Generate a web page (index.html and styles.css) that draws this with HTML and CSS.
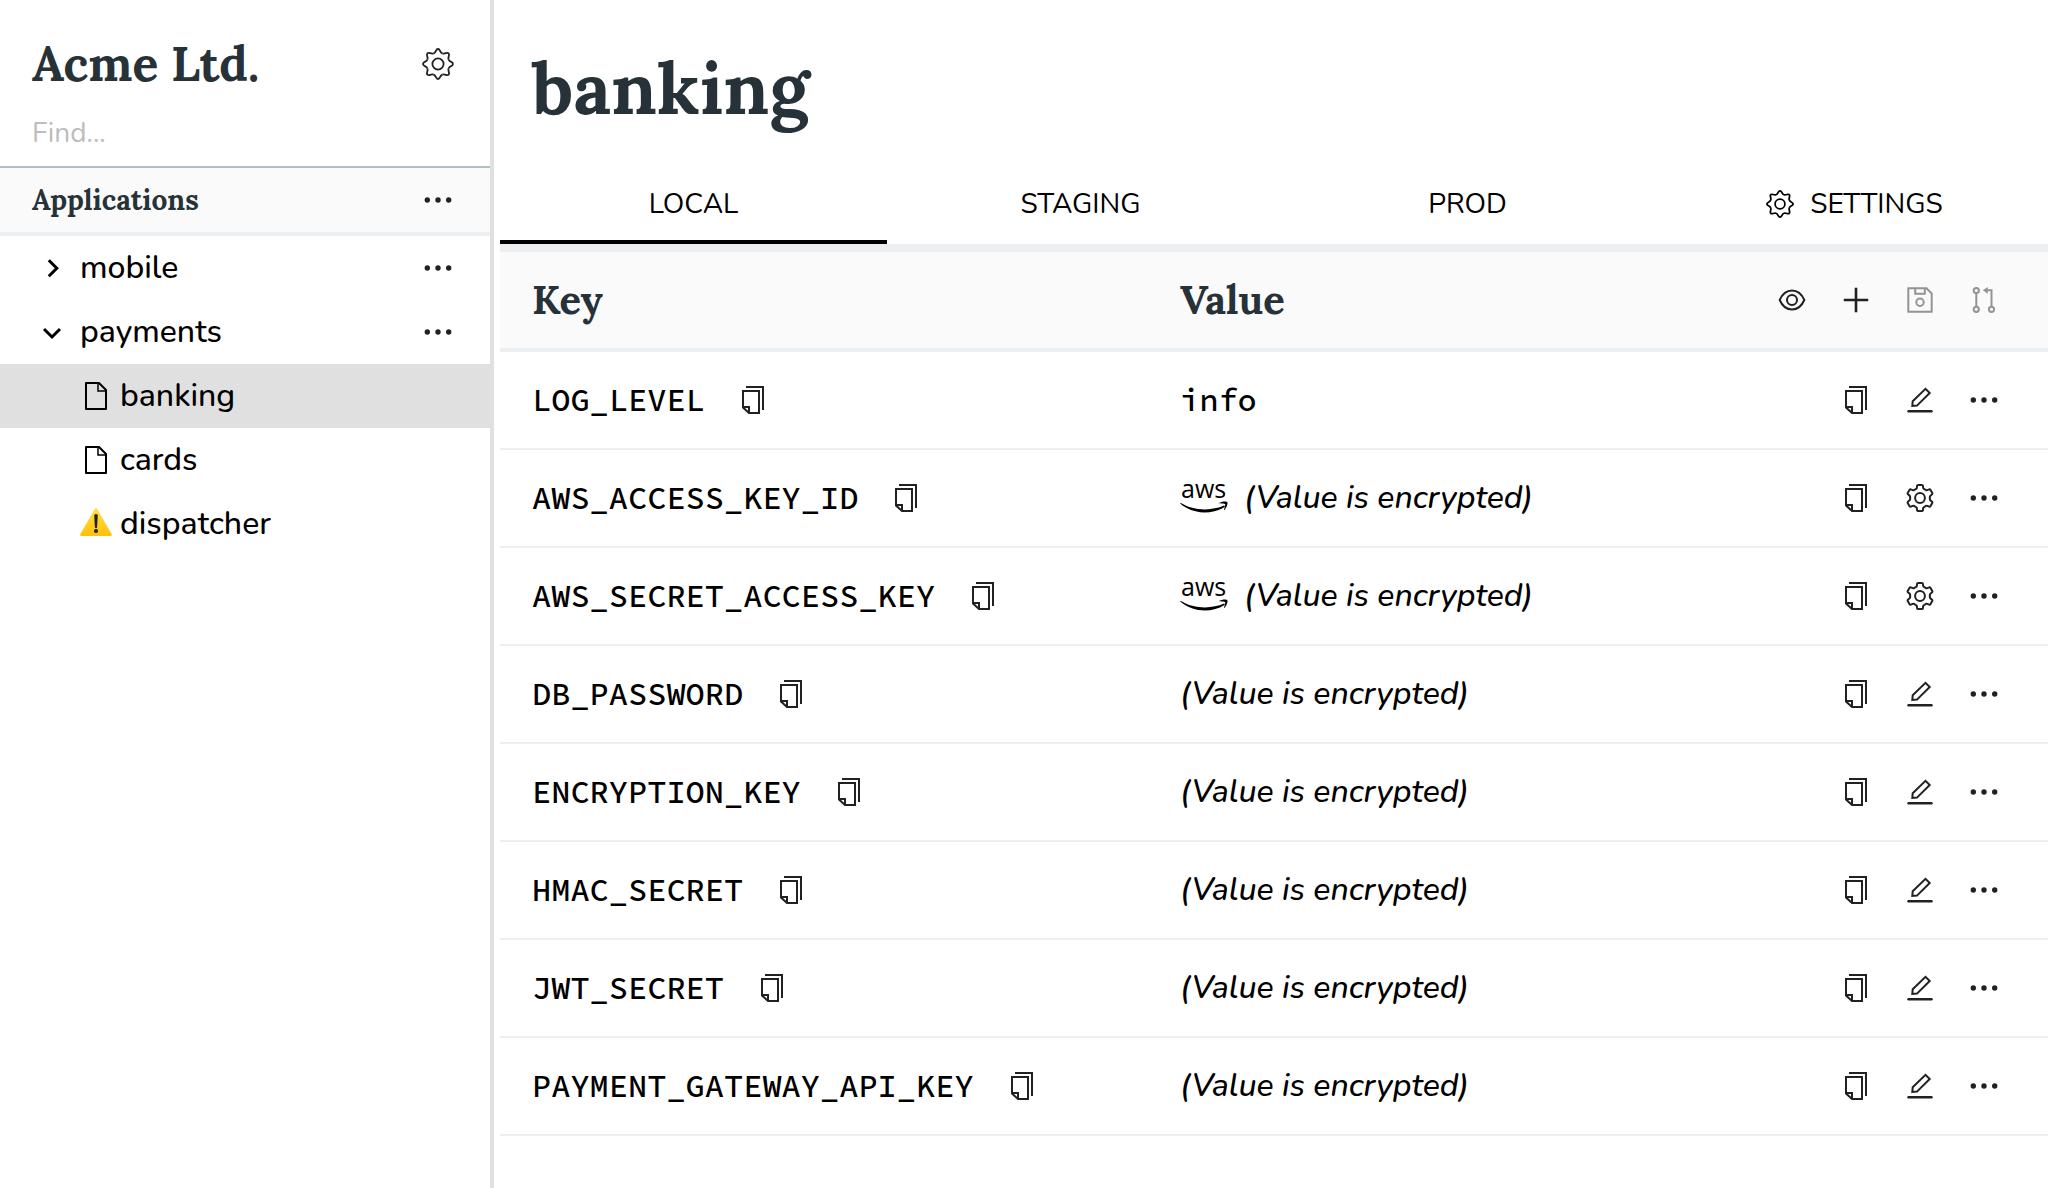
FILE: index.html
```html
<!DOCTYPE html>
<html lang="en">
<head>
    <meta charset="UTF-8">
    <title>banking - Acme Ltd.</title>
    <meta name="viewport" content="width=device-width, initial-scale=1">
    <link rel="stylesheet" href="styles.css">
</head>
<body>

    <!-- Icons -->
    <svg class="sprite" aria-hidden="true">
        <symbol id="gear" viewBox="0 0 32 32">
            <path id="cog" d="M11.6 5.4C14.4 4.2 13.6 1 16 1S17.6 4.2 20.4 5.4"/>
            <use href="#cog" transform="rotate(45 16 16)"/>
            <use href="#cog" transform="rotate(90 16 16)"/>
            <use href="#cog" transform="rotate(135 16 16)"/>
            <use href="#cog" transform="rotate(180 16 16)"/>
            <use href="#cog" transform="rotate(225 16 16)"/>
            <use href="#cog" transform="rotate(270 16 16)"/>
            <use href="#cog" transform="rotate(315 16 16)"/>
            <circle cx="16" cy="16" r="5.6"/>
        </symbol>
        <symbol id="gear-six" viewBox="0 0 32 32">
            <path id="cog-six" d="M11 7.4L12 7Q12.7 6.6 12.8 5.8L13.1 3.7Q13.3 2.9 14.1 2.9H17.9Q18.7 2.9 18.9 3.7L19.2 5.8Q19.3 6.6 20 7L21 7.4"/>
            <use href="#cog-six" transform="rotate(60 16 16)"/>
            <use href="#cog-six" transform="rotate(120 16 16)"/>
            <use href="#cog-six" transform="rotate(180 16 16)"/>
            <use href="#cog-six" transform="rotate(240 16 16)"/>
            <use href="#cog-six" transform="rotate(300 16 16)"/>
            <circle cx="16" cy="16" r="4.9"/>
        </symbol>
        <symbol id="dots" viewBox="0 0 32 32">
            <g fill="currentColor" stroke="none">
                <circle cx="5.3" cy="16" r="2.7"/>
                <circle cx="16" cy="16" r="2.7"/>
                <circle cx="26.7" cy="16" r="2.7"/>
            </g>
        </symbol>
        <symbol id="chevron-right" viewBox="0 0 32 32">
            <path d="M12.8 8.2L20.8 16.2L12.8 24.2" stroke-width="3"/>
        </symbol>
        <symbol id="chevron-down" viewBox="0 0 32 32">
            <path d="M8 13L16 21L24 13" stroke-width="3"/>
        </symbol>
        <symbol id="file" viewBox="0 0 32 32">
            <path d="M6 3H19L26 10V29H6Z" stroke-linejoin="round"/>
            <path d="M18 3V11H26" stroke-width="1.5"/>
        </symbol>
        <symbol id="warning" viewBox="0 0 32 32">
            <linearGradient id="amber" x1="0" y1="0" x2="0" y2="1">
                <stop offset="0" stop-color="#ffe045"/>
                <stop offset="1" stop-color="#ffc107"/>
            </linearGradient>
            <path d="M14.8 1Q16-.8 17.2 1L31.6 26Q32.4 28 30.5 28H1.5Q-.4 28 .4 26Z" fill="url(#amber)" stroke="none"/>
            <path d="M14.2 7.5Q14.2 6 16 6T17.8 7.5L17.1 19Q16.9 20.2 16 20.2T14.9 19Z" fill="#222" stroke="none"/>
            <circle cx="16" cy="23" r="2.1" fill="#222" stroke="none"/>
        </symbol>
        <symbol id="copy" viewBox="0 0 32 32">
            <path d="M9 3H26V26"/>
            <path d="M6 7H22V29H12L6 23.5Z"/>
            <path d="M6 23H12V29"/>
        </symbol>
        <symbol id="edit" viewBox="0 0 32 32">
            <path d="M8.3 22L8.7 17.2L21.5 4.8L25.7 9L13 21.6Z"/>
            <path d="M4.5 27.3H27.5" stroke-width="2.4" stroke-linecap="round"/>
        </symbol>
        <symbol id="eye" viewBox="0 0 32 32">
            <path d="M3.7 16C6.5 9.5 11 6.5 16 6.5S25.5 9.5 28.3 16C25.5 22.5 21 25.5 16 25.5S6.5 22.5 3.7 16Z"/>
            <circle cx="16" cy="16" r="5"/>
        </symbol>
        <symbol id="plus" viewBox="0 0 32 32">
            <path d="M16 3.8V28.2M3.8 16H28.2" stroke-width="2.6"/>
        </symbol>
        <symbol id="save" viewBox="0 0 32 32">
            <path d="M4.3 4.3H22.5L27.7 9.5V27.7H4.3Z"/>
            <path d="M11.2 4.3V9.8H20.8V4.3"/>
            <circle cx="16" cy="18.3" r="3.7"/>
        </symbol>
        <symbol id="compare" viewBox="0 0 32 32">
            <circle cx="8.3" cy="6.5" r="2.6"/>
            <circle cx="8.3" cy="25.3" r="2.6"/>
            <circle cx="23.5" cy="25.3" r="2.6"/>
            <path d="M8.3 9V22.7M23.5 22.7V6.3H18"/>
            <path d="M14.8 6.3L19.8 2.9V9.7Z" fill="currentColor" stroke="none"/>
        </symbol>
    </svg>

    <div class="app">
        <aside class="sidebar">
            <div class="org">
                <h2 class="org-name">Acme Ltd.</h2>
                <button class="icon-btn" aria-label="Organisation settings"><svg class="icon thin"><use href="#gear"/></svg></button>
            </div>
            <input class="find" type="text" placeholder="Find..." aria-label="Find">
            <div class="section">
                <h3 class="section-name">Applications</h3>
                <button class="icon-btn" aria-label="Applications menu"><svg class="icon"><use href="#dots"/></svg></button>
            </div>
            <nav class="tree">
                <div class="folder">
                    <a class="folder-link" href="#"><svg class="icon"><use href="#chevron-right"/></svg>mobile</a>
                    <button class="icon-btn" aria-label="mobile menu"><svg class="icon"><use href="#dots"/></svg></button>
                </div>
                <div class="folder">
                    <a class="folder-link" href="#"><svg class="icon"><use href="#chevron-down"/></svg>payments</a>
                    <button class="icon-btn" aria-label="payments menu"><svg class="icon"><use href="#dots"/></svg></button>
                </div>
                <a class="item active" href="#"><svg class="icon"><use href="#file"/></svg>banking</a>
                <a class="item" href="#"><svg class="icon"><use href="#file"/></svg>cards</a>
                <a class="item" href="#"><svg class="icon"><use href="#warning"/></svg>dispatcher</a>
            </nav>
        </aside>

        <main class="content">
            <header class="page-header">
                <h1>banking</h1>
            </header>

            <div class="tabs" role="tablist">
                <button class="tab selected" role="tab" aria-selected="true">LOCAL</button>
                <button class="tab" role="tab">STAGING</button>
                <button class="tab" role="tab">PROD</button>
                <button class="tab" role="tab"><svg class="icon small"><use href="#gear"/></svg>SETTINGS</button>
            </div>

            <table class="config">
                <thead>
                    <tr>
                        <th class="key">Key</th>
                        <th class="value">Value</th>
                        <th class="actions">
                            <div class="buttons">
                                <button class="icon-btn" aria-label="Show values"><svg class="icon"><use href="#eye"/></svg></button>
                                <button class="icon-btn" aria-label="Add"><svg class="icon"><use href="#plus"/></svg></button>
                                <button class="icon-btn" aria-label="Save" disabled><svg class="icon"><use href="#save"/></svg></button>
                                <button class="icon-btn" aria-label="Compare" disabled><svg class="icon"><use href="#compare"/></svg></button>
                            </div>
                        </th>
                    </tr>
                </thead>
                <tbody id="rows"></tbody>
            </table>
        </main>
    </div>

    <script>
        const entries = [
            { key: "LOG_LEVEL", value: "info" },
            { key: "AWS_ACCESS_KEY_ID", aws: true },
            { key: "AWS_SECRET_ACCESS_KEY", aws: true },
            { key: "DB_PASSWORD" },
            { key: "ENCRYPTION_KEY" },
            { key: "HMAC_SECRET" },
            { key: "JWT_SECRET" },
            { key: "PAYMENT_GATEWAY_API_KEY" },
        ];

        const awsLogo = `
            <svg class="aws-logo" viewBox="0 0 48 30">
                <text class="aws-text" x="1" y="15">aws</text>
                <path d="M.4 19.8C14 28.3 32 28 44 22.6Q45.3 22.8 44.5 24C32 32 13 31.5.4 20.8Z"/>
                <path d="M38.5 20.3C42 18.2 46.5 18.2 47.4 19.2C48 20.8 46.5 25 44.2 27.2C43.5 27.2 45.3 23 45.3 21.2C44.5 20.4 41 20.9 38.5 20.3Z"/>
            </svg>`;

        function iconButton(icon, label) {
            return `<button class="icon-btn" aria-label="${label}"><svg class="icon"><use href="#${icon}"/></svg></button>`;
        }

        document.getElementById('rows').innerHTML = entries.map(entry => `
            <tr>
                <td class="key"><div class="cell"><span class="mono">${entry.key}</span>${iconButton('copy', 'Copy key')}</div></td>
                <td class="value">
                    <div class="cell">
                        ${entry.aws ? awsLogo : ''}
                        ${entry.value ? `<span class="mono">${entry.value}</span>` : '<em>(Value is encrypted)</em>'}
                    </div>
                </td>
                <td class="actions">
                    <div class="buttons">
                        ${iconButton('copy', 'Copy value')}
                        ${entry.aws ? iconButton('gear-six', 'Configure') : iconButton('edit', 'Edit')}
                        ${iconButton('dots', 'More')}
                    </div>
                </td>
            </tr>
        `).join('');
    </script>

</body>
</html>
```
FILE: styles.css
```css
* {
    box-sizing: border-box;
}

body {
    margin: 0;
    font-family: Nunito, Lato, sans-serif;
    font-size: 32px;
    font-weight: 500;
    line-height: 40px;
    color: #000;
    background: #fff;
}

h1, h2, h3 {
    margin: 0;
}

h1, h2, h3, th {
    font-family: Lora, "Liberation Serif", serif;
    font-weight: bold;
    color: #263238;
}

a {
    color: inherit;
    text-decoration: none;
}

button, input {
    font-family: inherit;
    color: inherit;
    background: none;
    border: none;
    padding: 0;
}

button {
    cursor: pointer;
}

.sprite {
    position: absolute;
    width: 0;
    height: 0;
}

.icon {
    width: 32px;
    height: 32px;
    flex-shrink: 0;
    fill: none;
    stroke: currentColor;
    stroke-width: 2;
}

.icon.thin {
    stroke-width: 1.8;
}

.icon.small {
    width: 28px;
    height: 28px;
}

.icon-btn {
    display: flex;
    align-items: center;
    justify-content: center;
    width: 64px;
    height: 64px;
    flex-shrink: 0;
    color: #212121;
}

.icon-btn:disabled {
    color: #949494;
    cursor: default;
}

.app {
    display: flex;
    min-height: 100vh;
}

/* Sidebar */

.sidebar {
    width: 494px;
    flex-shrink: 0;
    border-right: 4px solid #e0e0e0;
}

.org, .section, .folder {
    display: flex;
    align-items: center;
    justify-content: space-between;
    padding: 0 20px 0 32px;
}

.org {
    padding-top: 32px;
}

.org-name {
    font-size: 48px;
    line-height: 56px;
}

.find {
    display: block;
    width: 100%;
    height: 72px;
    padding: 4px 32px 0;
    font-size: 28px;
    border-bottom: 2px solid #b0bec5;
    outline: none;
}

.find::placeholder {
    color: #bdbdbd;
}

.section {
    background: #fafafa;
    border-bottom: 4px solid #eceff1;
}

.section-name {
    font-size: 28px;
}

.folder-link {
    display: flex;
    align-items: center;
    gap: 12px;
    padding-left: 4px;
}

.item {
    display: flex;
    align-items: center;
    gap: 8px;
    height: 64px;
    padding-left: 80px;
}

.item.active {
    background: #e0e0e0;
}

/* Main area */

.content {
    flex: 1;
    min-width: 0;
    margin-left: 6px;
}

.page-header {
    padding: 44px 32px 36px;
}

h1 {
    font-size: 72px;
    line-height: 88px;
}

.tabs {
    display: flex;
    border-bottom: 4px solid #eee;
}

.tab {
    display: flex;
    align-items: center;
    justify-content: center;
    gap: 16px;
    flex: 1;
    height: 76px;
    font-size: 28px;
    border-bottom: 4px solid transparent;
}

.tab.selected {
    border-bottom-color: #000;
}

.config {
    width: 100%;
    table-layout: fixed;
    border-collapse: separate;
    border-spacing: 0;
}

.config th, .config td {
    height: 98px;
    padding: 0;
    text-align: left;
    border-bottom: 2px solid #eceff1;
}

.config th {
    height: 104px;
    font-size: 40px;
    background: #fafafa;
    border-top: 4px solid #eceff1;
    border-bottom-width: 4px;
}

.config .key {
    width: 680px;
    padding-left: 32px;
}

.config .actions {
    width: 288px;
    padding-right: 32px;
}

.cell {
    display: flex;
    align-items: center;
    gap: 16px;
}

.buttons {
    display: flex;
    justify-content: flex-end;
}

.mono {
    font-family: "Source Code Pro", "Liberation Mono", monospace;
}

.aws-logo {
    width: 48px;
    height: 30px;
    overflow: visible;
}

.aws-text {
    font-family: "Open Sans", sans-serif;
    font-size: 25px;
}
```
